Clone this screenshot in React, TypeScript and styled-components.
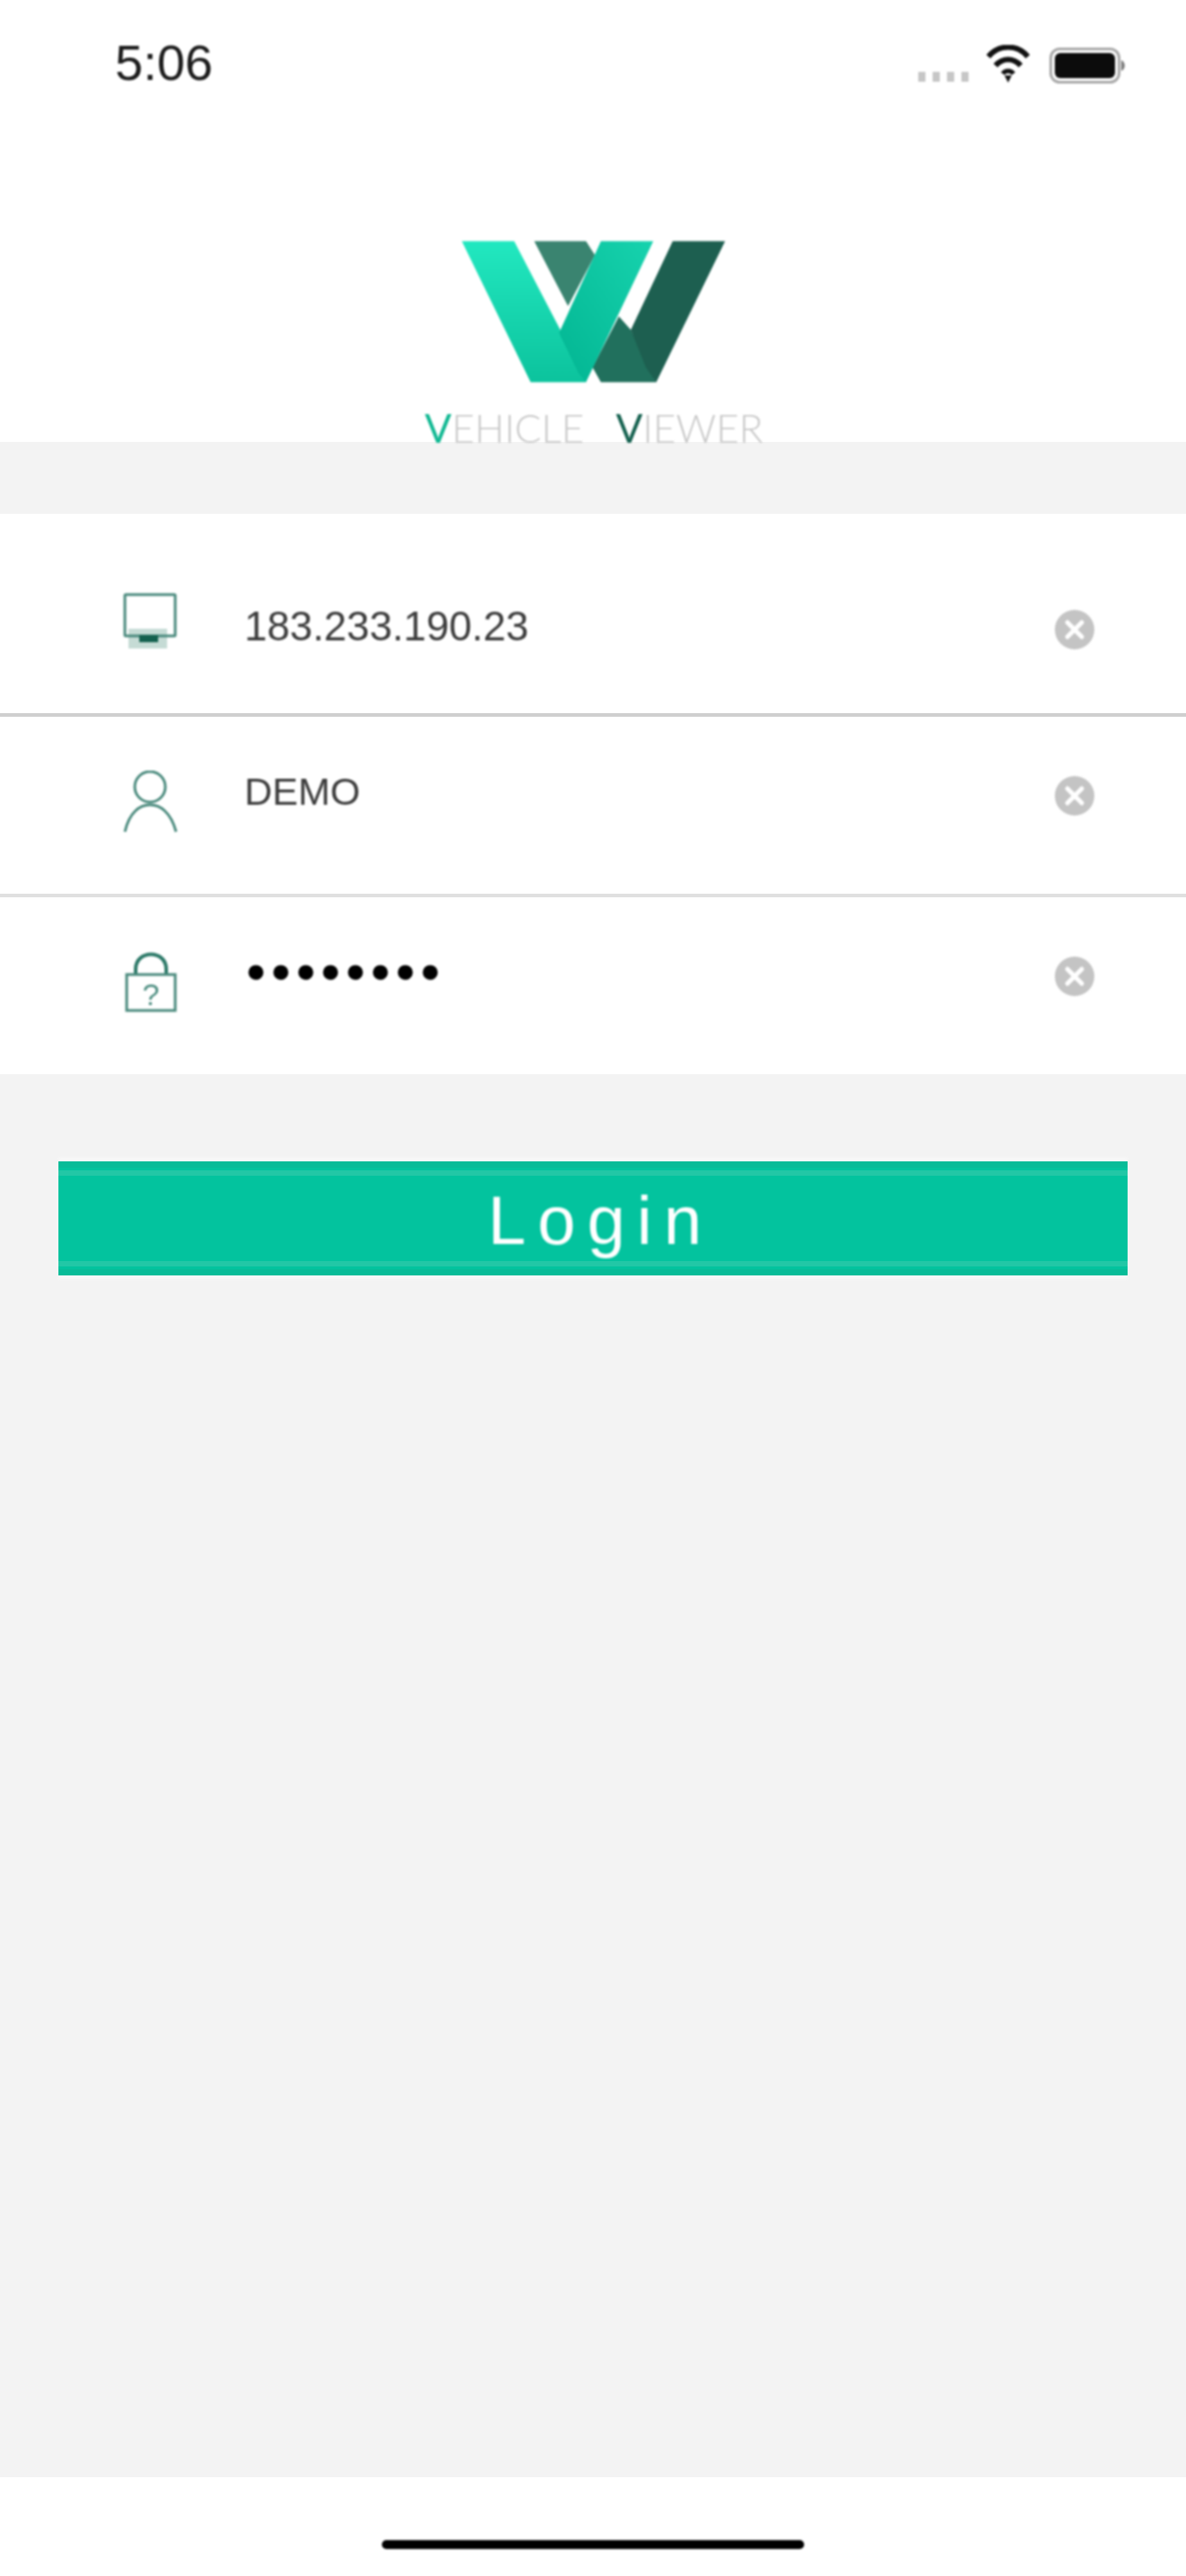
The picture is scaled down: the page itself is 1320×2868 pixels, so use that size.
import styled, { createGlobalStyle, css } from 'styled-components';

const GlobalStyle = createGlobalStyle`
  html, body {
    margin: 0;
    padding: 0;
    background: #fff;
  }
`;

// the reference is an upscaled capture, so drawn parts are slightly soft
const soft = css`
  filter: blur(0.9px);
`;

const Page = styled.div`
  width: 1320px;
  height: 2868px;
  display: flex;
  flex-direction: column;
  overflow: hidden;
  background: #f3f3f3;
  font-family: "Liberation Sans", Arial, sans-serif;
`;

const Header = styled.header`
  height: 492px;
  flex: none;
  background: #fff;
  display: flex;
  flex-direction: column;
  align-items: center;
`;

const StatusBar = styled.div`
  width: 100%;
  height: 140px;
  box-sizing: border-box;
  display: flex;
  align-items: flex-start;
  padding: 40px 68px 0 128px;
`;

const Time = styled.span`
  ${soft}
  font-size: 56px;
  line-height: 60px;
  color: #1c1c1c;
  flex: 1;
`;

const SignalDots = styled.div`
  ${soft}
  display: flex;
  gap: 8px;
  margin: 40px 20px 0 0;
`;

const SignalDot = styled.i`
  width: 8px;
  height: 11px;
  background: #c6c6c6;
`;

const WifiIcon = styled.svg`
  ${soft}
  width: 48px;
  height: 42px;
  margin: 10px 22px 0 0;
`;

const BatteryIcon = styled.svg`
  ${soft}
  width: 84px;
  height: 40px;
  margin-top: 13px;
`;

const LogoMark = styled.svg`
  ${soft}
  width: 293px;
  height: 158px;
  flex: none;
  margin-top: 129px;
`;

const Wordmark = styled.div`
  ${soft}
  display: flex;
  gap: 35px;
  margin: 34px 0 0 2px;
  font-family: Lato, "Liberation Sans", sans-serif;
  font-weight: 300;
  font-size: 44px;
  line-height: 32px;
  color: #c8c8c8;
`;

const Initial = styled.span<{ $color: string }>`
  color: ${props => props.$color};
  font-weight: 400;
`;

const Form = styled.section`
  margin-top: 80px;
  background: #fff;
  display: flex;
  flex-direction: column;
`;

const Row = styled.div<{ $height: number; $top: number; $bottom: number; $line?: string }>`
  height: ${props => props.$height}px;
  box-sizing: border-box;
  padding: ${props => props.$top}px 102px ${props => props.$bottom}px 136px;
  display: flex;
  align-items: center;
  border-bottom: ${props => (props.$line ? `4px solid ${props.$line}` : 'none')};
`;

const FieldIcon = styled.svg<{ $shift: number }>`
  ${soft}
  width: 64px;
  height: 70px;
  flex: none;
  margin-right: 72px;
  margin-top: ${props => props.$shift}px;
  fill: none;
  stroke: #4a8a7d;
  stroke-width: 3;
`;

const FieldText = styled.span<{ $shift: number; $size: number }>`
  ${soft}
  flex: 1;
  font-size: ${props => props.$size}px;
  color: #3c3c3c;
  margin-top: ${props => props.$shift}px;
`;

const PasswordText = styled.span`
  ${soft}
  flex: 1;
  margin: -10px 0 0 2px;
  font-size: 62px;
  line-height: 60px;
  letter-spacing: 6px;
  color: #000;
`;

const ClearIcon = styled.svg`
  ${soft}
  width: 44px;
  height: 44px;
  flex: none;
`;

const LoginButton = styled.button`
  margin: 97px 65px 0;
  height: 127px;
  flex: none;
  border: 0;
  padding: 4px 0 0 17px;
  background: #03c39e;
  box-shadow:
    0 -4px 3px #f8f8f8,
    0 4px 3px #f8f8f8,
    inset 0 7px 0 #08bc98,
    inset 0 10px 0 #03c39e,
    inset 0 16px 0 #22c7a6,
    inset 0 -7px 0 #08bc98,
    inset 0 -10px 0 #03c39e,
    inset 0 -16px 0 #22c7a6;
  color: #fff;
  font-family: "Liberation Sans", Arial, sans-serif;
  font-size: 76px;
  letter-spacing: 13px;
  line-height: 120px;
`;

const LoginLabel = styled.span`
  ${soft}
`;

const Spacer = styled.div`
  flex: 1;
`;

const HomeArea = styled.footer`
  height: 110px;
  flex: none;
  background: #fff;
  display: flex;
  justify-content: center;
  padding-top: 70px;
  box-sizing: border-box;
`;

const HomeBar = styled.div`
  ${soft}
  width: 470px;
  height: 10px;
  border-radius: 5px;
  background: #000;
`;

const Clear = () => (
  <ClearIcon viewBox="0 0 44 44">
    <circle cx="22" cy="22" r="22" fill="#c4c4c4" />
    <path d="M14 14 L30 30 M30 14 L14 30" stroke="#fff" strokeWidth="5" strokeLinecap="round" />
  </ClearIcon>
);

export default function App() {
  return (
    <Page>
      <GlobalStyle />
      <Header>
        <StatusBar>
          <Time>5:06</Time>
          <SignalDots>
            <SignalDot />
            <SignalDot />
            <SignalDot />
            <SignalDot />
          </SignalDots>
          <WifiIcon viewBox="0 0 48 42" fill="none" stroke="#111">
            <path d="M2 13 C14 -1 34 -1 46 13" strokeWidth="6" />
            <path d="M10 23 C18 14 30 14 38 23" strokeWidth="6" />
            <path d="M18 32 C21 28 27 28 30 32" strokeWidth="5" />
            <path d="M24 42 L20 34 L28 34 Z" fill="#111" stroke="none" />
          </WifiIcon>
          <BatteryIcon viewBox="0 0 84 40">
            <rect x="1.5" y="1.5" width="76" height="37" rx="10" fill="none" stroke="#a8a8a8" strokeWidth="3" />
            <rect x="6" y="6" width="67" height="28" rx="6" fill="#0c0c0c" />
            <path d="M80 14 C85 16 85 24 80 26 Z" fill="#777" />
          </BatteryIcon>
        </StatusBar>
        <LogoMark viewBox="215 88 880 472">
          <defs>
            <linearGradient id="brightArm" x1="0" y1="0" x2="0" y2="1">
              <stop offset="0" stopColor="#22e8c0" />
              <stop offset="1" stopColor="#0cc39d" />
            </linearGradient>
            <linearGradient id="frontArm" x1="1" y1="0" x2="0" y2="1">
              <stop offset="0" stopColor="#17d3ae" />
              <stop offset="1" stopColor="#02b592" />
            </linearGradient>
          </defs>
          <polygon points="457,88 630,88 660,135 570,305" fill="#3a8470" />
          <polygon points="740,340 780,385 865,560 680,560 652,510" fill="#21705d" />
          <polygon points="920,88 1095,88 865,560 830,510 780,385" fill="#1d5f50" />
          <polygon points="215,88 390,88 625,540 630,560 445,560" fill="url(#brightArm)" />
          <polygon points="680,88 855,88 630,560 605,530 540,395" fill="url(#frontArm)" />
        </LogoMark>
        <Wordmark>
          <span>
            <Initial $color="#10b892">V</Initial>EHICLE
          </span>
          <span>
            <Initial $color="#14614f">V</Initial>IEWER
          </span>
        </Wordmark>
      </Header>

      <Form>
        <Row $height={226} $top={36} $bottom={0} $line="#cfcfcf">
          <FieldIcon $shift={-12} viewBox="0 0 64 70">
            <path d="M7 40 V62 H50 V40" stroke="none" fill="#c5dbd5" />
            <rect x="3" y="2" width="56" height="46" rx="1" />
            <rect x="19" y="47" width="21" height="8" fill="#14614f" stroke="none" />
          </FieldIcon>
          <FieldText $shift={-6} $size={45.5}>183.233.190.23</FieldText>
          <Clear />
        </Row>
        <Row $height={201} $top={0} $bottom={22} $line="#e0e0e0">
          <FieldIcon $shift={14} viewBox="0 0 64 70">
            <circle cx="31" cy="18" r="17" />
            <path d="M3 68 C8 46 20 38 31 38 C42 38 54 46 60 68" />
          </FieldIcon>
          <FieldText $shift={-8} $size={43}>DEMO</FieldText>
          <Clear />
        </Row>
        <Row $height={197} $top={0} $bottom={22}>
          <FieldIcon $shift={14} viewBox="0 0 64 70">
            <path d="M15 26 V20 C15 -2 49 -2 49 20 V26" stroke="#2d7a69" strokeWidth="4" />
            <rect x="5" y="26" width="54" height="40" />
            <text x="32" y="60" textAnchor="middle" fontSize="34" fill="#4f8f82" stroke="none" fontFamily="Liberation Sans">?</text>
          </FieldIcon>
          <PasswordText>••••••••</PasswordText>
          <Clear />
        </Row>
      </Form>

      <LoginButton>
        <LoginLabel>Login</LoginLabel>
      </LoginButton>
      <Spacer />
      <HomeArea>
        <HomeBar />
      </HomeArea>
    </Page>
  );
}
